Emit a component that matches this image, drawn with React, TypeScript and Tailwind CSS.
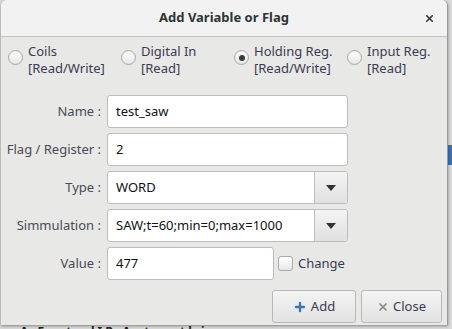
import { Plus, X } from 'lucide-react';

const font = { fontFamily: '"Noto Sans", "Open Sans", sans-serif' };

function Radio({ checked, top, bottom }: { checked?: boolean; top: string; bottom: string }) {
  return (
    <div className="flex items-start gap-[5px]">
      <div className="mt-[7px] flex h-[15px] w-[15px] shrink-0 items-center justify-center rounded-full border border-[#a9a9a9] bg-gradient-to-b from-[#ffffff] to-[#e6e6e6] shadow-[inset_0_1px_1px_rgba(0,0,0,0.08)]">
        {checked && <div className="h-[6px] w-[6px] rounded-full bg-[#3a3a3a]" />}
      </div>
      <div className="flex flex-col text-[13px] leading-[17px] text-[#3b3b4f]">
        <span className="block h-[16px] leading-[16px]">{top}</span>
        <span className="mt-[1px] block h-[16px] leading-[16px]">{bottom}</span>
      </div>
    </div>
  );
}

function Field({ label, children }: { label: string; children: React.ReactNode }) {
  return (
    <div className="flex h-[33px] items-center">
      <div className="w-[101px] pr-[1px] text-right text-[13px] text-[#4a4a55]">{label}&nbsp;:</div>
      <div className="ml-[5px] flex h-full items-stretch">{children}</div>
    </div>
  );
}

function TextBox({ value, width }: { value: string; width: number }) {
  return (
    <div
      className="flex items-center rounded-[3px] border border-[#bdbdbd] bg-white pl-[8px] text-[13px] text-[#111111]"
      style={{ width }}
    >
      {value}
    </div>
  );
}

function Combo({ value }: { value: string }) {
  return (
    <div className="flex w-[241px] rounded-[3px] border border-[#bdbdbd] bg-white">
      <div className="flex flex-1 items-center pl-[8px] text-[13px] text-[#111111]">{value}</div>
      <div className="flex w-[33px] items-center justify-center rounded-r-[3px] border-l border-[#bdbdbd] bg-gradient-to-b from-[#f4f4f4] to-[#e0e0e0]">
        <svg width="10" height="6" viewBox="0 0 10 6">
          <path d="M0 0 L10 0 L5 6 Z" fill="#333333" />
        </svg>
      </div>
    </div>
  );
}

export default function App() {
  return (
    <div className="relative h-[329px] w-[452px] overflow-hidden bg-[#d9d9d9]" style={font}>
      <div className="absolute left-[20px] top-[325px] text-[12px] font-bold leading-[14px] tracking-[3px] text-[#222222]">
        A Festo lIR Auto ntl i
      </div>
      <div className="absolute right-0 top-[145px] h-[20px] w-[4px] bg-[#3c6eb4]" />
      <div className="relative ml-[1px] flex h-[325px] w-[447px] flex-col overflow-hidden rounded-t-[6px] border-r border-[#9a9a9a] bg-[#e8e8e7] shadow-[0_1px_3px_rgba(0,0,0,0.4)]">
        <div className="relative flex h-[37px] shrink-0 items-center justify-center border-b border-[#c4c4c4] bg-[#f2f2f2]">
          <span className="text-[13px] font-bold text-[#2e3436]">Add Variable or Flag</span>
          <X className="absolute right-[12px] top-[13px] h-[11px] w-[11px] text-[#2e3436]" strokeWidth={3.5} />
        </div>

        <div className="flex h-[33px] pl-[7px] pt-[6px]">
          <div className="w-[113px]"><Radio top="Coils" bottom="[Read/Write]" /></div>
          <div className="w-[113px]"><Radio top="Digital In" bottom="[Read]" /></div>
          <div className="w-[113px]"><Radio checked top="Holding Reg." bottom="[Read/Write]" /></div>
          <div><Radio top="Input Reg." bottom="[Read]" /></div>
        </div>

        <div className="mt-[25px] flex flex-col gap-[5px]">
          <Field label="Name"><TextBox value="test_saw" width={241} /></Field>
          <Field label="Flag / Register"><TextBox value="2" width={241} /></Field>
          <Field label="Type"><Combo value="WORD" /></Field>
          <Field label="Simmulation"><Combo value="SAW;t=60;min=0;max=1000" /></Field>
          <Field label="Value">
            <TextBox value="477" width={167} />
            <div className="ml-[4px] flex items-center gap-[5px]">
              <div className="h-[15px] w-[15px] rounded-[3px] border border-[#a9a9a9] bg-gradient-to-b from-[#ffffff] to-[#e8e8e8]" />
              <span className="text-[13px] text-[#3b3b4f]">Change</span>
            </div>
          </Field>
        </div>

        <div className="mt-[10px] flex justify-end gap-[5px] pr-[5px]">
          <button className="flex h-[33px] w-[84px] items-center justify-center gap-[4px] rounded-[3px] border border-[#b8b8b8] bg-gradient-to-b from-[#f4f4f4] to-[#e2e2e2] text-[13px] text-[#3b3b4f]">
            <Plus className="h-[14px] w-[14px] text-[#3f74b5]" strokeWidth={4} />
            Add
          </button>
          <button className="flex h-[33px] w-[81px] items-center justify-center gap-[4px] rounded-[3px] border border-[#b8b8b8] bg-gradient-to-b from-[#f4f4f4] to-[#e2e2e2] text-[13px] text-[#3b3b4f]">
            <X className="h-[12px] w-[12px] text-[#8a8a8a]" strokeWidth={3.5} />
            Close
          </button>
        </div>
      </div>
    </div>
  );
}
